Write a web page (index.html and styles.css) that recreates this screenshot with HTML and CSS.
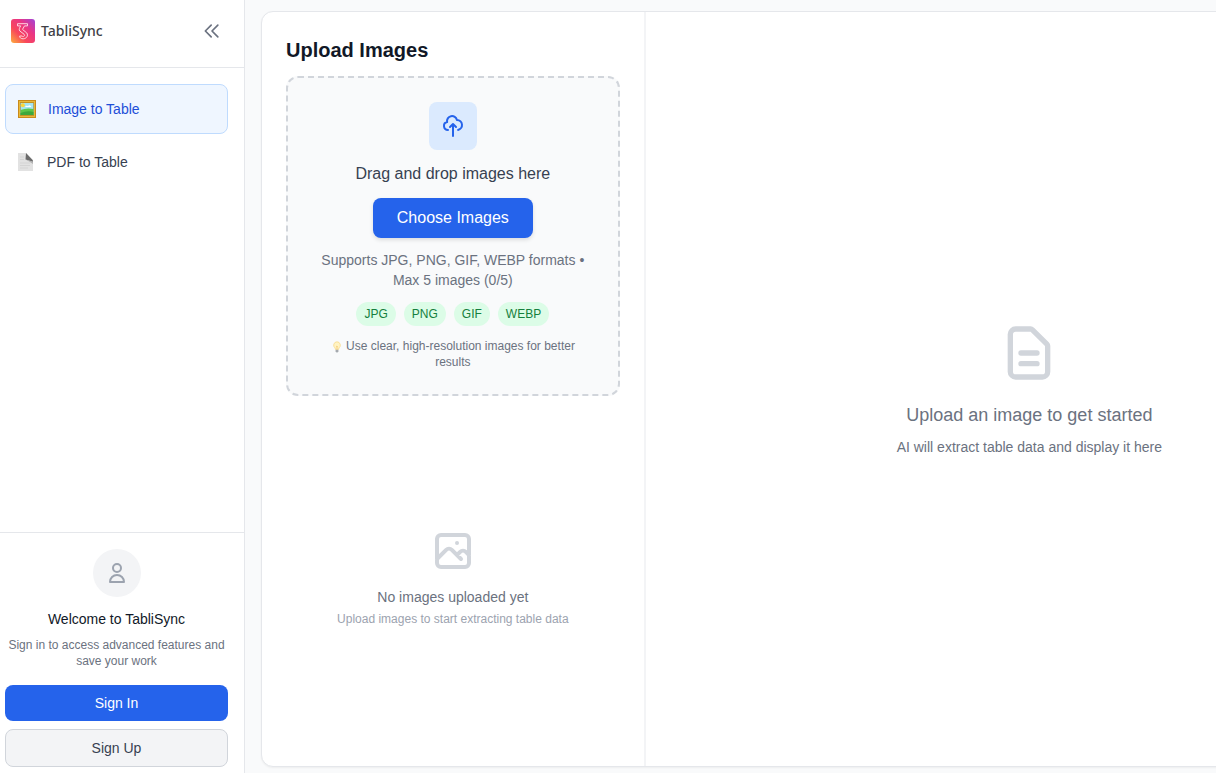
FILE: index.html
```html
<!DOCTYPE html>
<html lang="en">
<head>
  <meta charset="UTF-8" />
  <meta name="viewport" content="width=device-width, initial-scale=1" />
  <title>TabliSync - Image to Table</title>
  <link rel="stylesheet" href="styles.css">
</head>
<body>
  <aside class="sidebar">
    <header class="sidebar-header">
      <a class="brand" href="#">
        <svg class="brand-logo" viewBox="0 0 24 24" aria-hidden="true">
          <defs>
            <linearGradient id="logo-bg" x1="0" y1="1" x2="1" y2="0">
              <stop offset="0" stop-color="#fdae3d" />
              <stop offset="0.35" stop-color="#f8475c" />
              <stop offset="0.65" stop-color="#ea3584" />
              <stop offset="1" stop-color="#a044d8" />
            </linearGradient>
          </defs>
          <rect width="24" height="24" rx="3" fill="url(#logo-bg)" />
          <path d="M6.500 4.700h10v2.200h-3l-2 3.500 4.300 3.600c1.800 2.800-.5 5.800-3.600 5.800-2.200 0-3.600-1-3.600-2.800h2.400c1.600 1.500 3.500-.3 2-1.800L8.800 12c-1.200-1.500-.2-3.400.9-5.100H6.500z" fill="none" stroke="#ffd3e0" stroke-width="1" stroke-linejoin="round" />
        </svg>
        <span class="brand-name">TabliSync</span>
      </a>
      <button class="collapse-btn" type="button" aria-label="Collapse sidebar">
        <svg class="icon icon-sm" viewBox="0 0 24 24"><path d="M11 19l-7-7 7-7m8 14l-7-7 7-7" /></svg>
      </button>
    </header>

    <nav class="sidebar-nav">
      <a class="nav-item active" href="#">
        <svg class="nav-icon" viewBox="0 0 18 18" aria-hidden="true">
          <rect width="18" height="18" fill="#c98a1b" />
          <rect x="1" y="1" width="16" height="16" fill="#e9b93a" />
          <rect x="2" y="2.500" width="14" height="13" fill="#a06a10" />
          <rect x="2.500" y="3" width="13" height="12" fill="#a5e5f3" />
          <circle cx="4.800" cy="5.300" r="2" fill="#fbd63c" />
          <path d="M7 7q1-2 3-1 2-2 3.500 1z" fill="#fff" />
          <path d="M2.500 10q6-2.500 13-1v6h-13z" fill="#5cc64a" />
          <path d="M2.500 13q7-3 13-1v3h-13z" fill="#3da73b" />
        </svg>
        Image to Table
      </a>
      <a class="nav-item" href="#">
        <svg class="nav-icon" viewBox="0 0 18 18" aria-hidden="true">
          <path d="M1 0h8l7 7v11H1z" fill="#e2e2e2" />
          <path d="M9 0l7 7.500v1.500L8.500 6.500z" fill="#6a6a6a" />
          <path d="M8.500 6.500l7.500 2v2.500q-4-3-7.500-4.500z" fill="#b5b5b5" />
          <path d="M3 4h4M3 6.500h4M3 10h10M3 12.500h10M3 15h8" stroke="#cfcfcf" stroke-width="0.7" />
        </svg>
        PDF to Table
      </a>
    </nav>

    <section class="account">
      <div class="avatar">
        <svg class="icon" viewBox="0 0 24 24"><path d="M16 7a4 4 0 11-8 0 4 4 0 018 0zM12 14a7 7 0 00-7 7h14a7 7 0 00-7-7z" /></svg>
      </div>
      <h3>Welcome to TabliSync</h3>
      <p>Sign in to access advanced features and save your work</p>
      <button class="sign-in-btn" type="button">Sign In</button>
      <button class="sign-up-btn" type="button">Sign Up</button>
    </section>
  </aside>

  <main>
    <div class="workspace">
      <section class="upload-panel">
        <h2>Upload Images</h2>
        <div class="dropzone">
          <div class="dropzone-icon">
            <svg class="icon" viewBox="0 0 24 24"><path d="M7 16a4 4 0 01-.88-7.903A5 5 0 1115.9 6L16 6a5 5 0 011 9.900M15 13l-3-3m0 0l-3 3m3-3v12" /></svg>
          </div>
          <p class="dropzone-title">Drag and drop images here</p>
          <button class="choose-btn" type="button">Choose Images</button>
          <p class="dropzone-info">Supports JPG, PNG, GIF, WEBP formats • Max 5 images (0/5)</p>
          <ul class="formats">
            <li>JPG</li>
            <li>PNG</li>
            <li>GIF</li>
            <li>WEBP</li>
          </ul>
          <p class="tip">
            <svg class="bulb" viewBox="0 0 12 12" aria-hidden="true">
              <path d="M6 .8a3.400 3.400 0 00-2 6.100l.6 1.700h2.800L8 6.900A3.400 3.400 0 006 .8z" fill="#fff3c4" stroke="#f8d98a" stroke-width="0.8" />
              <path d="M5.200 5l.8.800.8-.8M6 5.800v2.400" fill="none" stroke="#f3b94d" stroke-width="0.6" />
              <path d="M4.600 8.800h2.800v1.700L6.500 11.500h-1l-.9-1z" fill="#a5a9ae" />
            </svg>
            Use clear, high-resolution images for better results
          </p>
        </div>
        <div class="empty-list">
          <svg class="icon icon-lg" viewBox="0 0 24 24"><path d="M4 16l4.586-4.586a2 2 0 012.828 0L16 16m-2-2l1.586-1.586a2 2 0 012.828 0L20 14m-6-6h.01M6 20h12a2 2 0 002-2V6a2 2 0 00-2-2H6a2 2 0 00-2 2v12a2 2 0 002 2z" /></svg>
          <p class="empty-title">No images uploaded yet</p>
          <p class="empty-text">Upload images to start extracting table data</p>
        </div>
      </section>

      <section class="result-panel">
        <svg class="icon icon-xl" viewBox="0 0 24 24"><path d="M9 12h6m-6 4h6m2 5H7a2 2 0 01-2-2V5a2 2 0 012-2h5.586a1 1 0 01.707.293l5.414 5.414a1 1 0 01.293.707V19a2 2 0 01-2 2z" /></svg>
        <p class="result-title">Upload an image to get started</p>
        <p class="result-text">AI will extract table data and display it here</p>
      </section>
    </div>
  </main>
</body>
</html>
```

FILE: styles.css
```css
* {
  box-sizing: border-box;
}
body {
  font-family: "Liberation Sans", Arial, sans-serif;
  font-size: 14px;
  line-height: 20px;
  background: #f9fafb;
  color: #111827;
  margin: 0;
  height: 100vh;
  display: flex;
  overflow: hidden;
}
h2, h3, p, ul {
  margin: 0;
  padding: 0;
}
a {
  color: inherit;
  text-decoration: none;
}
button {
  font: inherit;
  border: none;
  border-radius: 8px;
  cursor: pointer;
}
.icon {
  display: block;
  width: 24px;
  height: 24px;
  fill: none;
  stroke: currentColor;
  stroke-width: 2;
  stroke-linecap: round;
  stroke-linejoin: round;
}
.icon-sm {
  width: 20px;
  height: 20px;
}
.icon-lg {
  width: 48px;
  height: 48px;
  color: #d1d5db;
}
.icon-xl {
  width: 64px;
  height: 64px;
  color: #d1d5db;
}

/* Sidebar */
.sidebar {
  width: 245px;
  flex-shrink: 0;
  background: white;
  border-right: 1px solid #e5e7eb;
  display: flex;
  flex-direction: column;
}
.sidebar-header {
  display: flex;
  justify-content: space-between;
  align-items: center;
  padding: 15px 16px 20px 11px;
  border-bottom: 1px solid #e5e7eb;
}
.brand {
  display: flex;
  align-items: center;
  gap: 6px;
}
.brand-logo {
  width: 24px;
  height: 24px;
}
.brand-name {
  font-family: "Noto Sans", sans-serif;
  font-size: 14px;
  line-height: 22px;
  font-weight: 500;
  color: #3f3f46;
}
.collapse-btn {
  background: none;
  padding: 6px;
  color: #6b7280;
}
.sidebar-nav {
  flex-grow: 1;
  display: flex;
  flex-direction: column;
  gap: 4px;
  padding: 16px 16px 16px 5px;
}
.nav-item {
  display: flex;
  align-items: center;
  gap: 12px;
  height: 48px;
  padding: 0 12px;
  border-radius: 8px;
  color: #374151;
}
.nav-item.active {
  height: 50px;
  background: #eff6ff;
  border: 1px solid #bfdbfe;
  color: #1d4ed8;
}
.nav-icon {
  width: 18px;
  height: 18px;
}
.account {
  display: flex;
  flex-direction: column;
  align-items: center;
  text-align: center;
  padding: 16px 16px 6px 5px;
  border-top: 1px solid #e5e7eb;
}
.avatar {
  display: flex;
  align-items: center;
  justify-content: center;
  width: 48px;
  height: 48px;
  border-radius: 50%;
  background: #f3f4f6;
  color: #9ca3af;
  margin-bottom: 12px;
}
.account h3 {
  font-size: 14px;
  font-weight: 400;
  margin-bottom: 8px;
}
.account p {
  font-size: 12px;
  line-height: 16px;
  color: #6b7280;
  margin-bottom: 16px;
}
.sign-in-btn,
.sign-up-btn {
  width: 100%;
  padding: 8px 16px;
}
.sign-in-btn {
  background: #2563eb;
  color: white;
  margin-bottom: 8px;
}
.sign-up-btn {
  background: #f3f4f6;
  border: 1px solid #d1d5db;
  color: #374151;
}

/* Workspace */
main {
  flex: 1;
  min-width: 0;
  display: flex;
  padding: 11px 16px 6px;
  overflow: hidden;
}
.workspace {
  flex: 1;
  min-width: 1153px; /* runs off to the right on small windows */
  display: grid;
  grid-template-columns: 1fr 2fr;
  background: white;
  border: 1px solid #e5e7eb;
  border-radius: 12px;
  box-shadow: 0 1px 2px rgba(0,0,0,0.05);
}
.upload-panel {
  display: flex;
  flex-direction: column;
  padding: 24px;
  border-right: 2px solid #f3f4f6;
}
.upload-panel h2 {
  font-size: 20px;
  line-height: 28px;
  font-weight: 700;
  margin-bottom: 12px;
}
.dropzone {
  display: flex;
  flex-direction: column;
  align-items: center;
  gap: 12px;
  padding: 24px;
  text-align: center;
  background: #f9fafb;
  border: 2px dashed #d1d5db;
  border-radius: 12px;
}
.dropzone-icon {
  display: flex;
  align-items: center;
  justify-content: center;
  width: 48px;
  height: 48px;
  border-radius: 8px;
  background: #dbeafe;
  color: #2563eb;
}
.dropzone-title {
  font-size: 16px;
  line-height: 24px;
  color: #374151;
}
.choose-btn {
  font-size: 16px;
  line-height: 24px;
  padding: 8px 24px;
  background: #2563eb;
  color: white;
  box-shadow: 0 2px 4px rgba(0,0,0,0.12);
}
.dropzone-info {
  color: #6b7280;
}
.formats {
  display: flex;
  gap: 8px;
  list-style: none;
}
.formats li {
  font-size: 12px;
  line-height: 16px;
  padding: 4px 8px;
  border-radius: 12px;
  background: #dcfce7;
  color: #15803d;
}
.tip {
  font-size: 12px;
  line-height: 16px;
  color: #6b7280;
}
.bulb {
  width: 12px;
  height: 12px;
  vertical-align: text-bottom;
}
.empty-list {
  flex-grow: 1;
  display: flex;
  flex-direction: column;
  align-items: center;
  justify-content: center;
  margin-top: 16px;
}
.empty-title {
  margin: 12px 0 4px;
  color: #6b7280;
}
.empty-text {
  font-size: 12px;
  line-height: 16px;
  color: #9ca3af;
}
.result-panel {
  display: flex;
  flex-direction: column;
  align-items: center;
  justify-content: center;
}
.result-title {
  font-size: 18px;
  line-height: 28px;
  margin: 16px 0 8px;
  color: #6b7280;
}
.result-text {
  color: #6b7280;
}
```
